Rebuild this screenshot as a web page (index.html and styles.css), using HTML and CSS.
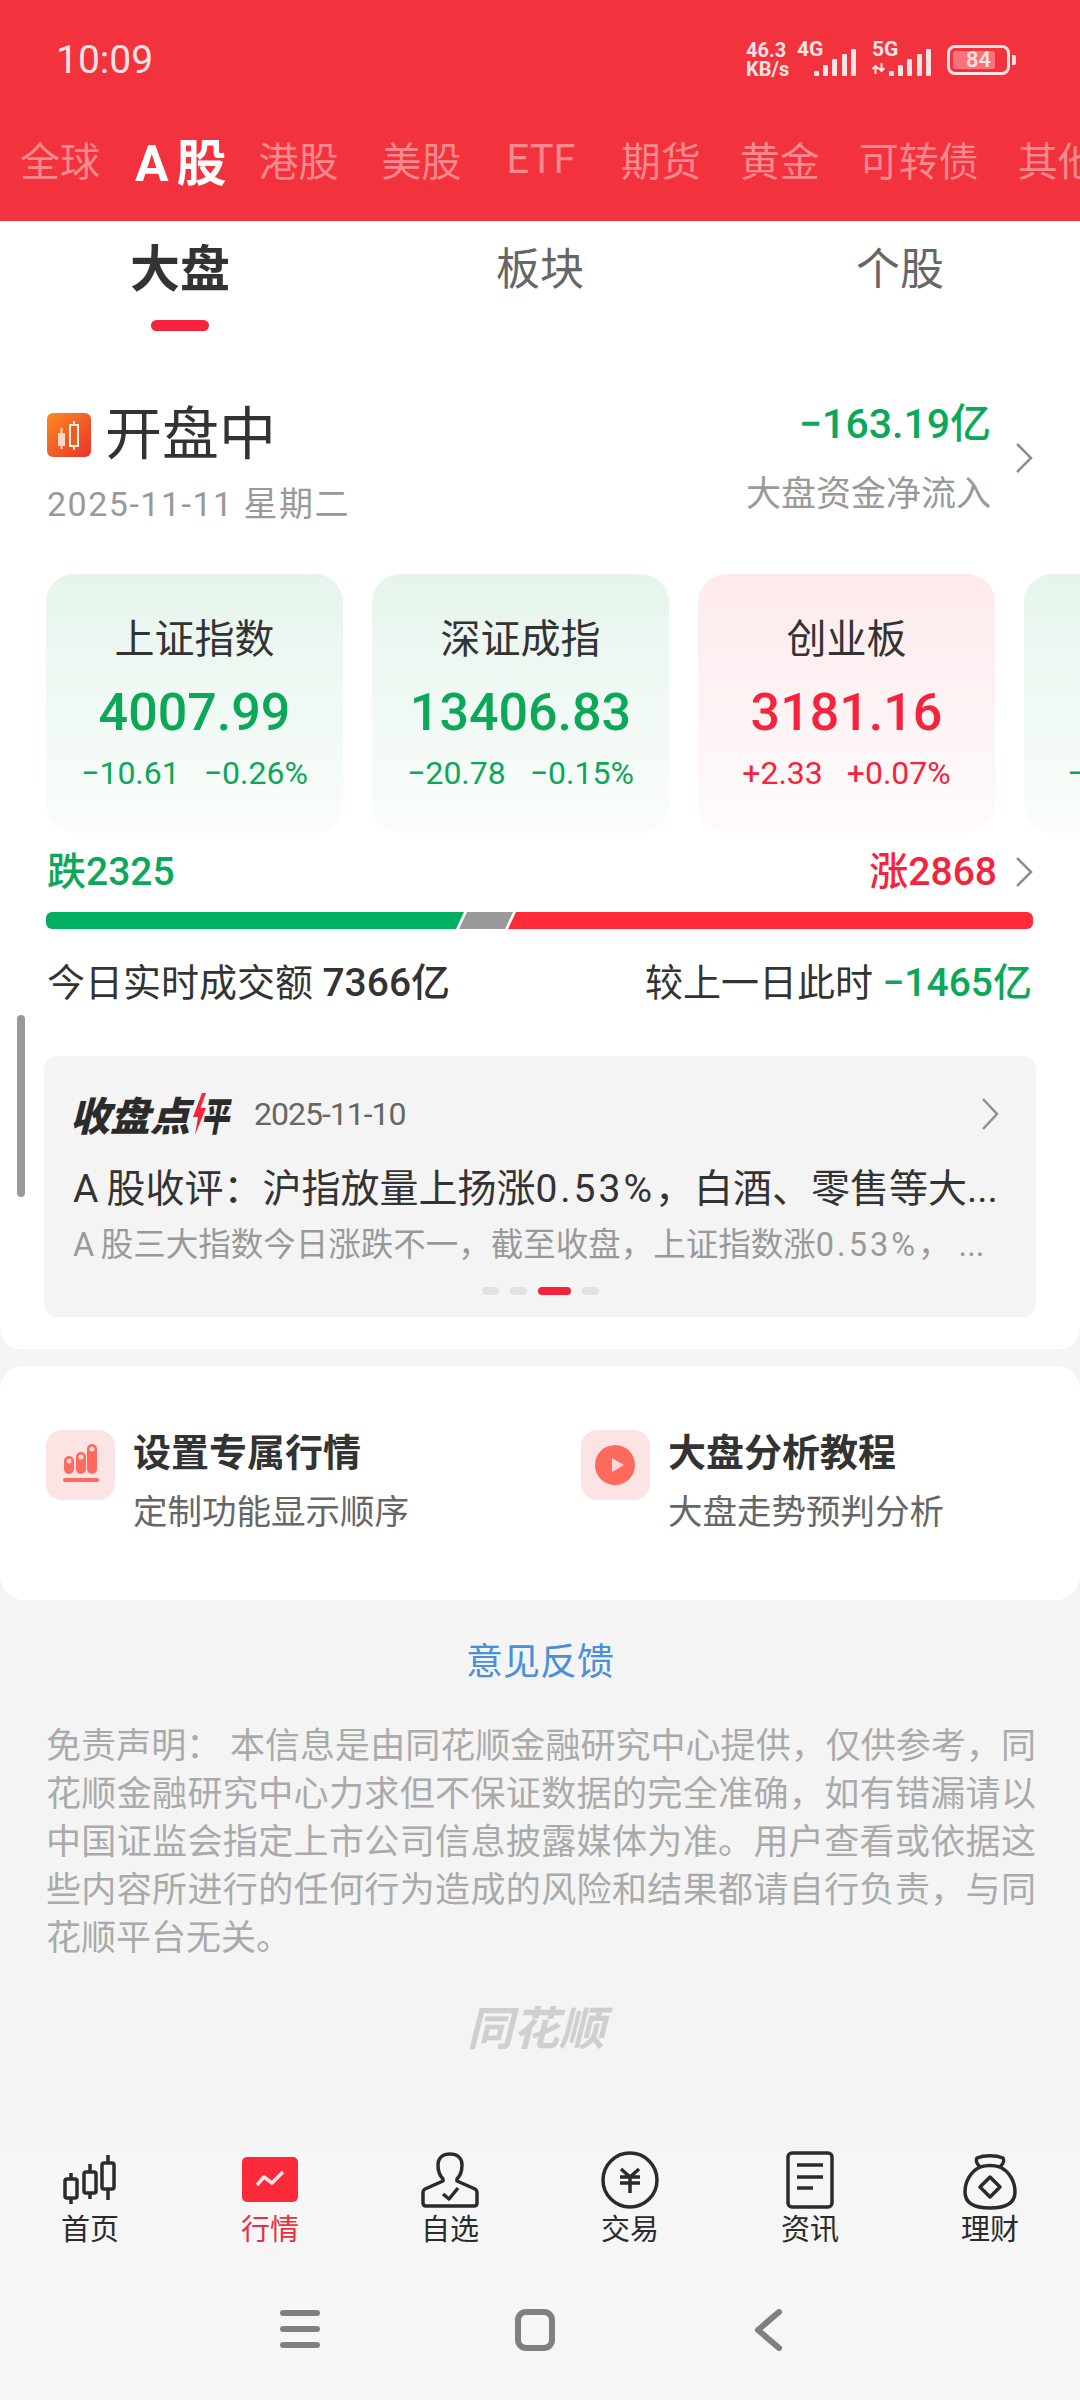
FILE: index.html
```html
<!DOCTYPE html>
<html lang="zh-CN">
<head>
    <meta charset="UTF-8">
    <meta name="viewport" content="width=device-width, initial-scale=1.0">
    <title>行情 - 大盘</title>
    <link rel="stylesheet" href="styles.css">
</head>
<body>

<div class="page">

    <!-- Red header -->
    <header class="top">
        <div class="status">
            <span class="clock">10:09</span>
            <div class="status-right">
                <div class="speed"><span>46.3</span><span>KB/s</span></div>
                <div class="net">
                    <span class="net-name">4G</span>
                    <svg class="signal" width="42" height="27" viewBox="0 0 42 27"><rect x="0" y="22" width="5" height="5" rx="1"/><rect x="9" y="16" width="5" height="11" rx="1"/><rect x="18" y="10" width="5" height="17" rx="1"/><rect x="28" y="5" width="5" height="22" rx="1"/><rect x="37" y="0" width="5" height="27" rx="1"/></svg>
                </div>
                <div class="net net-five">
                    <div class="net-stack">
                        <span class="net-name">5G</span>
                        <svg width="13" height="11" viewBox="0 0 13 11"><path d="M3.5 11V3M0.5 6L3.5 3L6.500 6M9.500 0V8M6.800 5L9.500 8L12.500 5" fill="none" stroke="#fde3e3" stroke-width="2"/></svg>
                    </div>
                    <svg class="signal" width="42" height="27" viewBox="0 0 42 27"><rect x="0" y="22" width="5" height="5" rx="1"/><rect x="9" y="16" width="5" height="11" rx="1"/><rect x="18" y="10" width="5" height="17" rx="1"/><rect x="28" y="5" width="5" height="22" rx="1"/><rect x="37" y="0" width="5" height="27" rx="1"/></svg>
                </div>
                <div class="battery">
                    <div class="battery-body"><span class="battery-fill"></span><span class="battery-num">84</span></div>
                    <span class="battery-tip"></span>
                </div>
            </div>
        </div>
        <nav class="market-tabs">
            <a>全球</a>
            <a class="on">A股</a>
            <a class="after-on">港股</a>
            <a>美股</a>
            <a class="wide">ETF</a>
            <a class="wide">期货</a>
            <a>黄金</a>
            <a>可转债</a>
            <a>其他</a>
        </nav>
    </header>

    <!-- Overview -->
    <section class="overview">
        <div class="sub-tabs">
            <div class="sub-tab on"><span>大盘</span><i></i></div>
            <div class="sub-tab"><span>板块</span></div>
            <div class="sub-tab"><span>个股</span></div>
        </div>

        <div class="market-head">
            <div>
                <div class="state">
                    <svg class="state-icon" width="44" height="44" viewBox="0 0 44 44">
                        <defs><linearGradient id="stateBg" x1="0" y1="0" x2="1" y2="1"><stop offset="0" stop-color="#ff8a1e"/><stop offset="1" stop-color="#e8322e"/></linearGradient></defs>
                        <rect width="44" height="44" rx="6" fill="url(#stateBg)"/>
                        <path d="M14.500 15V36" stroke="#ffd9c0" stroke-width="2"/>
                        <rect x="11" y="20" width="7" height="13" fill="#ffd9c0"/>
                        <path d="M27 8V37" stroke="#fff0e0" stroke-width="2"/>
                        <rect x="23" y="12" width="8" height="21" fill="#ef5a26" stroke="#fff0e0" stroke-width="2"/>
                    </svg>
                    <span>开盘中</span>
                </div>
                <div class="date">2025-11-11 星期二</div>
            </div>
            <div class="flow">
                <div class="flow-text">
                    <div class="flow-num">−163.19亿</div>
                    <div class="flow-label">大盘资金净流入</div>
                </div>
                <svg class="chevron" width="18" height="30" viewBox="0 0 18 30"><path d="M2 1L16 15L2 29"/></svg>
            </div>
        </div>

        <div class="cards">
            <div class="card green">
                <div class="card-name">上证指数</div>
                <div class="card-value">4007.99</div>
                <div class="card-change"><span>−10.61</span><span>−0.26%</span></div>
            </div>
            <div class="card green">
                <div class="card-name">深证成指</div>
                <div class="card-value">13406.83</div>
                <div class="card-change"><span>−20.78</span><span>−0.15%</span></div>
            </div>
            <div class="card red">
                <div class="card-name">创业板</div>
                <div class="card-value">3181.16</div>
                <div class="card-change"><span>+2.33</span><span>+0.07%</span></div>
            </div>
            <div class="card green card-cut">
                <div class="card-name">&nbsp;</div>
                <div class="card-value">&nbsp;</div>
                <div class="card-change"><span>−</span></div>
            </div>
        </div>

        <div class="breadth">
            <span class="fall">跌2325</span>
            <div class="rise-wrap">
                <span class="rise">涨2868</span>
                <svg class="chevron" width="18" height="30" viewBox="0 0 18 30"><path d="M2 1L16 15L2 29"/></svg>
            </div>
        </div>
        <div class="ratio">
            <div class="ratio-fall"></div>
            <div class="ratio-flat"></div>
            <div class="ratio-rise"></div>
        </div>

        <div class="volume">
            <div>今日实时成交额 <b>7366亿</b></div>
            <div>较上一日此时 <b class="fall">−1465亿</b></div>
        </div>

        <div class="review">
            <div class="review-head">
                <div class="review-logo">
                    <span>收盘点</span>
                    <svg width="15" height="42" viewBox="0 0 15 42"><path d="M10 0L1 24H6L3 42L14 15H8.500L14 0Z" fill="#f5233c"/></svg>
                    <span class="review-logo-end">平</span>
                </div>
                <span class="review-date">2025-11-10</span>
                <svg class="chevron" width="18" height="32" viewBox="0 0 18 32"><path d="M2 1L16 16L2 31"/></svg>
            </div>
            <div class="review-title">A&#8201;股收评&#65306;沪指放量上扬涨<span class="num">0.53%</span>&#65292;白酒、零售等大...</div>
            <div class="review-sub">A&#8201;股三大指数今日涨跌不一&#65292;截至收盘&#65292;上证指数涨<span class="num">0.53%</span>&#65292;&nbsp;...</div>
            <div class="dots"><i></i><i></i><i class="on"></i><i></i></div>
        </div>
    </section>

    <!-- Shortcuts -->
    <section class="shortcuts">
        <div class="shortcut">
            <svg width="69" height="70" viewBox="0 0 69 70">
                <rect width="69" height="70" rx="16" fill="#fde4e4"/>
                <rect x="18" y="26" width="10" height="18" rx="5" fill="#ff6a5f"/>
                <rect x="30" y="22" width="10" height="22" rx="5" fill="#ff6a5f"/>
                <rect x="41" y="14" width="10" height="30" rx="5" fill="#ff6a5f"/>
                <circle cx="23" cy="31" r="2.500" fill="#ffd9d5"/>
                <circle cx="35" cy="27" r="2.500" fill="#ffd9d5"/>
                <circle cx="46" cy="19" r="2.500" fill="#ffd9d5"/>
                <rect x="17" y="48" width="36" height="4" rx="2" fill="#ff6a5f"/>
            </svg>
            <div>
                <div class="shortcut-title">设置专属行情</div>
                <div class="shortcut-sub">定制功能显示顺序</div>
            </div>
        </div>
        <div class="shortcut">
            <svg width="69" height="70" viewBox="0 0 69 70">
                <rect width="69" height="70" rx="16" fill="#fde4e4"/>
                <circle cx="34" cy="35" r="20" fill="#ff6a5f"/>
                <path d="M31 28L43 35L31 42Z" fill="#ffd9d5"/>
            </svg>
            <div>
                <div class="shortcut-title">大盘分析教程</div>
                <div class="shortcut-sub">大盘走势预判分析</div>
            </div>
        </div>
    </section>

    <div class="feedback">意见反馈</div>
    <p class="notice">免责声明&#65306; 本信息是由同花顺金融研究中心提供&#65292;仅供参考&#65292;同花顺金融研究中心力求但不保证数据的完全准确&#65292;如有错漏请以中国证监会指定上市公司信息披露媒体为准。用户查看或依据这些内容所进行的任何行为造成的风险和结果都请自行负责&#65292;与同花顺平台无关。</p>
    <div class="brand">同花顺</div>

    <!-- Bottom tabs -->
    <footer class="bottom">
        <nav class="tabbar">
            <a>
                <svg width="60" height="60" viewBox="0 0 60 60"><path d="M11 23V54M30 14V49M48 5V50"/><rect x="5" y="29" width="12" height="19" rx="2" fill="#f6f6f6"/><rect x="24" y="22" width="12" height="21" rx="2" fill="#f6f6f6"/><rect x="42" y="13" width="12" height="26" rx="2" fill="#f6f6f6"/></svg>
                <span>首页</span>
            </a>
            <a class="on">
                <svg width="60" height="60" viewBox="0 0 60 60"><rect x="2" y="7" width="56" height="45" rx="5" fill="#fb2a3b" stroke="none"/><path d="M17 35L24 27L32 33L43 22" stroke="#fde3e5"/></svg>
                <span>行情</span>
            </a>
            <a>
                <svg width="60" height="60" viewBox="0 0 60 60"><path d="M23 29C19 25 18 20 18 15C18 8 23 4 30 4C37 4 42 8 42 15C42 20 41 25 37 29V31L55 39Q57 40 57 43V53Q57 56 54 56H6Q3 56 3 53V43Q3 40 5 39L23 31Z"/><path d="M23 44L29 49L38 38"/></svg>
                <span>自选</span>
            </a>
            <a>
                <svg width="60" height="60" viewBox="0 0 60 60"><circle cx="30" cy="30" r="27"/><path d="M21 19L30 27L39 19M20 27H40M20 33H40M30 27V43"/></svg>
                <span>交易</span>
            </a>
            <a>
                <svg width="60" height="60" viewBox="0 0 60 60"><rect x="8" y="3" width="44" height="54" rx="4"/><path d="M17 15H43M17 27H43M17 38H33"/></svg>
                <span>资讯</span>
            </a>
            <a>
                <svg width="60" height="60" viewBox="0 0 60 60"><path d="M20 17C17 14 15 11 17 8C24 5 36 5 43 8C45 11 43 14 40 17C33 15 27 15 20 17Z"/><path d="M20 17C10 22 5 32 5 42C5 53 13 58 30 58C47 58 55 53 55 42C55 32 50 22 40 17"/><path d="M30 27L40 37L30 47L20 37Z"/></svg>
                <span>理财</span>
            </a>
        </nav>
        <div class="sysbar">
            <svg width="40" height="40" viewBox="0 0 40 40"><path d="M3 4H37M3 20H37M3 36H37"/></svg>
            <svg width="40" height="42" viewBox="0 0 40 42"><rect x="3" y="3" width="34" height="36" rx="8"/></svg>
            <svg width="40" height="42" viewBox="0 0 40 42"><path d="M29 3L8 21L29 39"/></svg>
        </div>
    </footer>

    <div class="scrollbar"></div>
</div>

</body>
</html>
```

FILE: styles.css
```css
/* General */
* {
    margin: 0;
    padding: 0;
    box-sizing: border-box;
}

html, body {
    width: 1080px;
    height: 2400px;
    overflow: hidden;
}

body {
    font-family: Roboto, "Noto Sans CJK SC", sans-serif;
    color: #333;
    background: #f4f4f4;
}

.page {
    position: relative;
    display: flex;
    flex-direction: column;
    height: 2400px;
}

/* Red header */
.top {
    height: 221px;
    background: #f2323c;
    overflow: hidden;
}

.status {
    display: flex;
    justify-content: space-between;
    align-items: center;
    height: 120px;
    padding: 0 64px 0 56px;
    color: #fde3e3;
}

.clock {
    font-size: 39px;
}

.status-right {
    display: flex;
    align-items: center;
    font-weight: 500;
}

.speed {
    display: flex;
    flex-direction: column;
    width: 51px;
    font-size: 20px;
    line-height: 19px;
    font-weight: 700;
}

.net {
    position: relative;
    width: 60px;
    height: 32px;
}

.net .signal {
    position: absolute;
    left: 17px;
    bottom: 0;
    fill: #fde3e3;
}

.net-name {
    font-size: 21px;
    line-height: 17px;
    font-weight: 700;
}

.net > .net-name {
    position: absolute;
    left: 0;
    top: -3px;
}

.net-five {
    width: 64px;
    margin-left: 11px;
}

.net-five .signal {
    left: 21px;
}

.net-stack {
    position: absolute;
    left: 4px;
    top: -3px;
    display: flex;
    flex-direction: column;
    gap: 5px;
}

.battery {
    display: flex;
    align-items: center;
    gap: 2px;
    margin-left: 15px;
}

.battery-body {
    position: relative;
    width: 63px;
    height: 30px;
    border: 3px solid #fde3e3;
    border-radius: 8px;
    text-align: center;
    font-size: 22px;
    line-height: 24px;
}

.battery-fill {
    position: absolute;
    left: 3px;
    top: 3px;
    width: 42px;
    height: 18px;
    background: #f9737a;
    border-radius: 2px;
}

.battery-num {
    position: relative;
}

.battery-tip {
    width: 4px;
    height: 10px;
    background: #fde3e3;
    border-radius: 0 2px 2px 0;
}

.market-tabs {
    display: flex;
    align-items: center;
    height: 84px;
    margin-top: -3px;
    padding-left: 20px;
    gap: 39px;
    white-space: nowrap;
    font-size: 40px;
    color: #f8898e;
}

.market-tabs a {
    flex-shrink: 0;
}

.market-tabs .on {
    margin-left: -4px;
    font-size: 50px;
    font-weight: 700;
    letter-spacing: 8px;
    color: #fff;
}

.market-tabs .after-on {
    margin: 0 4px 0 -15px;
}

.market-tabs .wide {
    margin-left: 6px;
}

/* Overview */
.overview {
    padding: 9px 0 32px;
    background: #fff;
    border-radius: 0 0 20px 20px;
}

.sub-tabs {
    display: flex;
}

.sub-tab {
    flex: 1;
    display: flex;
    flex-direction: column;
    align-items: center;
    font-size: 44px;
    line-height: 80px;
    color: #666;
}

.sub-tab.on {
    font-size: 50px;
    font-weight: 700;
    color: #333;
}

.sub-tab i {
    width: 58px;
    height: 11px;
    margin-top: 10px;
    background: #f5233c;
    border-radius: 6px;
}

.market-head {
    display: flex;
    justify-content: space-between;
    margin-top: 68px;
    padding: 0 47px;
}

.state {
    display: flex;
    align-items: center;
    gap: 14px;
    margin-top: 4px;
    font-size: 57px;
    line-height: 64px;
}

.state-icon {
    flex-shrink: 0;
}

.date {
    margin-top: 15px;
    font-size: 34px;
    line-height: 44px;
    letter-spacing: 1.500px;
    color: #999;
}

.flow {
    display: flex;
    align-items: center;
    gap: 24px;
    height: 118px;
}

.flow-text {
    text-align: right;
}

.flow-num {
    font-size: 41px;
    line-height: 50px;
    font-weight: 500;
    color: #0aa858;
}

.flow-label {
    margin-top: 24px;
    font-size: 35px;
    line-height: 44px;
    color: #999;
}

.chevron {
    flex-shrink: 0;
    fill: none;
    stroke: #8f8f8f;
    stroke-width: 2.500;
}

.cards {
    display: flex;
    gap: 29px;
    margin-top: 48px;
    padding-left: 46px;
    overflow: hidden;
}

.card {
    flex-shrink: 0;
    width: 297px;
    height: 259px;
    padding-top: 41px;
    border-radius: 28px;
    text-align: center;
}

.card.green {
    background: linear-gradient(#e6f5ec, #fafdfb);
    color: #0aa858;
}

.card.red {
    background: linear-gradient(#fdeaec, #fefbfb);
    color: #f5233c;
}

.card-name {
    font-size: 40px;
    line-height: 50px;
    color: #333;
}

.card-value {
    margin-top: 18px;
    font-size: 52px;
    line-height: 60px;
    font-weight: 500;
}

.card-change {
    display: flex;
    justify-content: center;
    gap: 24px;
    margin-top: 10px;
    font-size: 32px;
    line-height: 40px;
}

.card-cut .card-change {
    justify-content: flex-start;
    padding-left: 43px;
}

.breadth {
    display: flex;
    justify-content: space-between;
    align-items: center;
    margin-top: 17px;
    padding: 0 47px;
    font-size: 39px;
    line-height: 44px;
    font-weight: 500;
}

.fall {
    color: #0aa858;
}

.rise {
    color: #f5233c;
}

.rise-wrap {
    display: flex;
    align-items: center;
    gap: 18px;
}

.ratio {
    position: relative;
    height: 17px;
    margin: 18px 47px 0 46px;
}

.ratio div {
    position: absolute;
    top: 0;
    height: 17px;
}

.ratio-fall {
    left: 0;
    width: 418px;
    background: #00b060;
    border-radius: 6px 0 0 6px;
    clip-path: polygon(0 0, 100% 0, 410px 100%, 0 100%);
}

.ratio-flat {
    left: 413px;
    width: 54px;
    background: #999;
    clip-path: polygon(8px 0, 100% 0, 46px 100%, 0 100%);
}

.ratio-rise {
    left: 462px;
    right: 0;
    background: #ff2b39;
    border-radius: 0 6px 6px 0;
    clip-path: polygon(8px 0, 100% 0, 100% 100%, 0 100%);
}

.volume {
    display: flex;
    justify-content: space-between;
    margin-top: 29px;
    padding: 0 48px 0 47px;
    font-size: 38px;
    line-height: 50px;
}

.volume b {
    font-size: 39px;
    font-weight: 500;
}

/* Review */
.review {
    margin: 48px 44px 0;
    padding: 36px 37px 22px 29px;
    background: #f4f4f4;
    border-radius: 14px;
}

.review-head {
    display: flex;
    align-items: center;
    height: 44px;
}

.review-logo {
    display: flex;
    align-items: center;
    margin-left: -3px;
    font-size: 40px;
    font-weight: 900;
    font-style: italic;
    color: #2b2b2b;
}

.review-logo svg {
    margin-left: 2px;
}

.review-logo-end {
    margin: 0 -6px 0 -12px;
    transform: scaleX(0.7);
}

.review-date {
    flex: 1;
    margin-left: 25px;
    font-size: 32px;
    letter-spacing: -1px;
    color: #666;
}

.review-title {
    margin-top: 28px;
    font-size: 39px;
    line-height: 50px;
    white-space: nowrap;
    color: #333;
}

.review-sub {
    margin-top: 9px;
    font-size: 32.500px;
    line-height: 44px;
    white-space: nowrap;
    color: #999;
}

.num {
    letter-spacing: 3px;
}

.dots {
    display: flex;
    justify-content: center;
    gap: 11px;
    margin-top: 20px;
    padding-left: 9px;
}

.dots i {
    width: 17px;
    height: 8px;
    background: #e2e2e2;
    border-radius: 4px;
}

.dots .on {
    width: 33px;
    background: #f5233c;
}

/* Shortcuts */
.shortcuts {
    display: flex;
    height: 234px;
    margin-top: 17px;
    padding: 64px 46px 0;
    background: #fff;
    border-radius: 24px;
}

.shortcut {
    display: flex;
    flex-shrink: 0;
    gap: 18px;
    width: 535px;
}

.shortcut svg {
    flex-shrink: 0;
}

.shortcut-title {
    font-size: 38px;
    line-height: 46px;
    font-weight: 700;
}

.shortcut-sub {
    margin-top: 14px;
    font-size: 34.500px;
    line-height: 44px;
    color: #666;
}

/* Notes */
.feedback {
    margin-top: 38px;
    text-align: center;
    font-size: 37px;
    line-height: 50px;
    color: #4a90d9;
}

.notice {
    margin-top: 35px;
    padding: 0 44px 0 46px;
    font-size: 35px;
    line-height: 48px;
    text-align: justify;
    color: #aaa;
}

.brand {
    margin-top: 41px;
    padding-right: 8px;
    text-align: center;
    font-size: 46px;
    line-height: 50px;
    font-weight: 700;
    font-style: italic;
    color: #cfcfcf;
}

/* Bottom tabs */
.bottom {
    position: absolute;
    left: 0;
    right: 0;
    top: 2150px;
    bottom: 0;
    background: #f6f6f6;
}

.tabbar {
    display: flex;
}

.tabbar a {
    flex: 1;
    display: flex;
    flex-direction: column;
    align-items: center;
    font-size: 29px;
    line-height: 36px;
    color: #2b2b2b;
}

.tabbar svg {
    margin-bottom: 2px;
    fill: none;
    stroke: #2b2b2b;
    stroke-width: 3.500;
    stroke-linejoin: round;
}

.tabbar .on {
    color: #e8303f;
}

.sysbar {
    display: flex;
    justify-content: center;
    gap: 195px;
    padding: 61px 10px 0 0;
}

.sysbar svg {
    fill: none;
    stroke: #808080;
    stroke-width: 6;
    stroke-linecap: round;
    stroke-linejoin: round;
}

.scrollbar {
    position: absolute;
    left: 17px;
    top: 1015px;
    width: 8px;
    height: 182px;
    background: #999;
    border-radius: 4px;
}
```
